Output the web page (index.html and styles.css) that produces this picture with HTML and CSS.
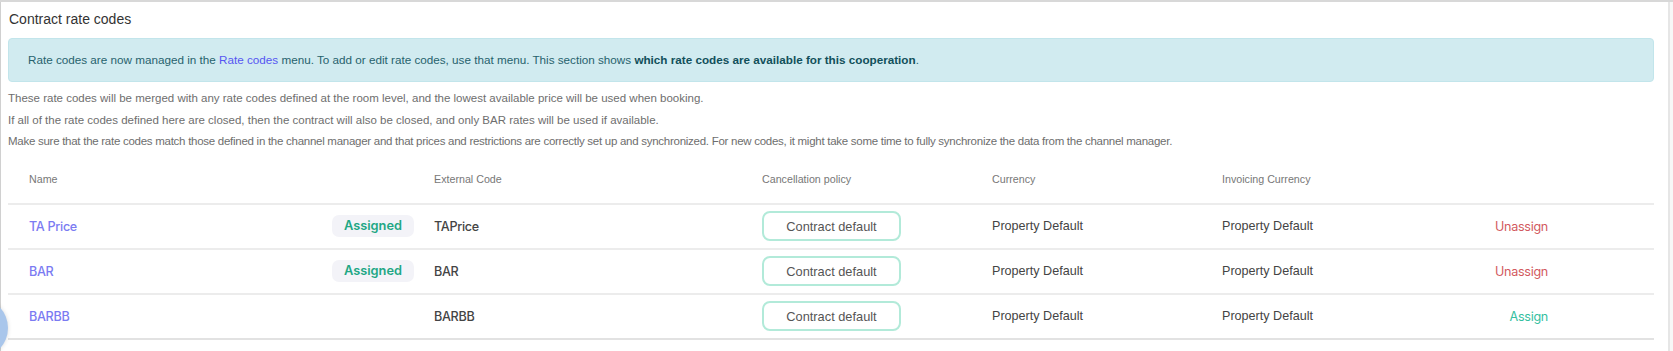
FILE: index.html
```html
<!DOCTYPE html>
<html lang="en">
<head>
<meta charset="utf-8">
<title>Contract rate codes</title>
<link rel="stylesheet" href="styles.css">
</head>
<body>
<div class="frame">
  <section class="card">
    <h2 class="title">Contract rate codes</h2>
    <div class="alert">
      Rate codes are now managed in the <a class="alert-link" href="#">Rate codes</a> menu. To add or edit rate codes, use that menu. This section shows <strong>which rate codes are available for this cooperation</strong>.
    </div>
    <div class="notes">
      <p>These rate codes will be merged with any rate codes defined at the room level, and the lowest available price will be used when booking.</p>
      <p>If all of the rate codes defined here are closed, then the contract will also be closed, and only BAR rates will be used if available.</p>
      <p class="tight">Make sure that the rate codes match those defined in the channel manager and that prices and restrictions are correctly set up and synchronized. For new codes, it might take some time to fully synchronize the data from the channel manager.</p>
    </div>
    <div class="table">
      <div class="row head">
        <div class="cell c-name">Name</div>
        <div class="cell">External Code</div>
        <div class="cell">Cancellation policy</div>
        <div class="cell">Currency</div>
        <div class="cell">Invoicing Currency</div>
        <div class="cell"></div>
      </div>
      <div class="row">
        <div class="cell c-name"><a class="name" href="#">TA Price</a><span class="badge">Assigned</span></div>
        <div class="cell code">TAPrice</div>
        <div class="cell"><button class="policy">Contract default</button></div>
        <div class="cell val">Property Default</div>
        <div class="cell val">Property Default</div>
        <div class="cell act"><a class="unassign" href="#">Unassign</a></div>
      </div>
      <div class="row">
        <div class="cell c-name"><a class="name" href="#">BAR</a><span class="badge">Assigned</span></div>
        <div class="cell code">BAR</div>
        <div class="cell"><button class="policy">Contract default</button></div>
        <div class="cell val">Property Default</div>
        <div class="cell val">Property Default</div>
        <div class="cell act"><a class="unassign" href="#">Unassign</a></div>
      </div>
      <div class="row last">
        <div class="cell c-name"><a class="name" href="#">BARBB</a></div>
        <div class="cell code">BARBB</div>
        <div class="cell"><button class="policy">Contract default</button></div>
        <div class="cell val">Property Default</div>
        <div class="cell val">Property Default</div>
        <div class="cell act"><a class="assign" href="#">Assign</a></div>
      </div>
    </div>
  </section>
  <div class="fab"></div>
</div>
</body>
</html>
```
FILE: styles.css
```css
html, body {
  margin: 0;
  padding: 0;
}
body {
  background: #f7f7f7;
  font-family: "Liberation Sans", Arial, sans-serif;
  color: #444;
  overflow: hidden;
}
.frame {
  border-top: 2px solid #d8d8d8;
  height: 349px;
  position: relative;
  overflow: hidden;
}
.card {
  width: 1646px;
  height: 100%;
  background: #fff;
  border-left: 1px solid #d0d0d0;
  border-right: 2px solid #e6e6e6;
  padding: 7px 14px 0 7px;
}
.title {
  margin: 0 0 9px 1px;
  font-size: 14px;
  line-height: 20px;
  font-weight: normal;
  color: #333;
}
.alert {
  background: #d1ebf0;
  border: 1px solid #c2e5eb;
  border-radius: 4px;
  padding: 13px 19px;
  font-size: 11.7px;
  line-height: 16px;
  color: #27626d;
}
.alert-link {
  color: #5656f2;
  text-decoration: none;
}
.alert strong {
  color: #11505b;
}
.notes {
  margin-top: 6px;
  font-size: 11.5px;
  line-height: 21.5px;
  color: #6e6e6e;
}
.notes p {
  margin: 0;
}
.notes .tight {
  letter-spacing: -0.27px;
}
.table {
  display: flex;
  flex-direction: column;
}
.row {
  display: grid;
  grid-template-columns: 416px 328px 230px 230px 230px 1fr;
  align-items: center;
  height: 43px;
  border-bottom: 2px solid #ececec;
}
.row.head {
  height: 48px;
  padding-top: 2px;
  font-size: 10.7px;
  color: #777;
}
.row.last {
  border-bottom-color: #e2e2e2;
}
.cell {
  padding: 0 10px;
  white-space: nowrap;
}
.c-name {
  padding-left: 21px;
  display: flex;
  align-items: center;
  justify-content: space-between;
}
.name {
  font-family: Inter, "Liberation Sans", sans-serif;
  font-weight: 500;
  font-size: 12.6px;
  color: #7b7bf2;
  text-decoration: none;
  letter-spacing: -0.3px;
}
.badge {
  font-family: Inter, "Liberation Sans", sans-serif;
  font-weight: 600;
  font-size: 12.8px;
  color: #22a784;
  background: #f3f3f8;
  border-radius: 7px;
  width: 82px;
  height: 22px;
  line-height: 22px;
  text-align: center;
}
.code {
  font-family: Inter, "Liberation Sans", sans-serif;
  font-weight: 500;
  font-size: 12.6px;
  color: #444;
  letter-spacing: -0.3px;
}
.policy {
  font-family: "Liberation Sans", Arial, sans-serif;
  font-size: 12.8px;
  color: #555;
  background: #fff;
  border: 2px solid #b2ead9;
  border-radius: 8px;
  width: 139px;
  height: 30px;
  padding: 0;
}
.val {
  font-size: 12.6px;
  color: #444;
}
.act {
  text-align: right;
  padding-right: 106px;
}
.unassign, .assign {
  font-family: Inter, "Liberation Sans", sans-serif;
  font-size: 12.6px;
  text-decoration: none;
  letter-spacing: -0.3px;
}
.unassign {
  color: #d25a60;
}
.assign {
  color: #35c09f;
}
.fab {
  position: absolute;
  left: -52px;
  top: 296px;
  width: 60px;
  height: 60px;
  border-radius: 50%;
  background: #a9c6eb;
  box-shadow: 0 0 4px rgba(0,0,0,0.15);
}
```
